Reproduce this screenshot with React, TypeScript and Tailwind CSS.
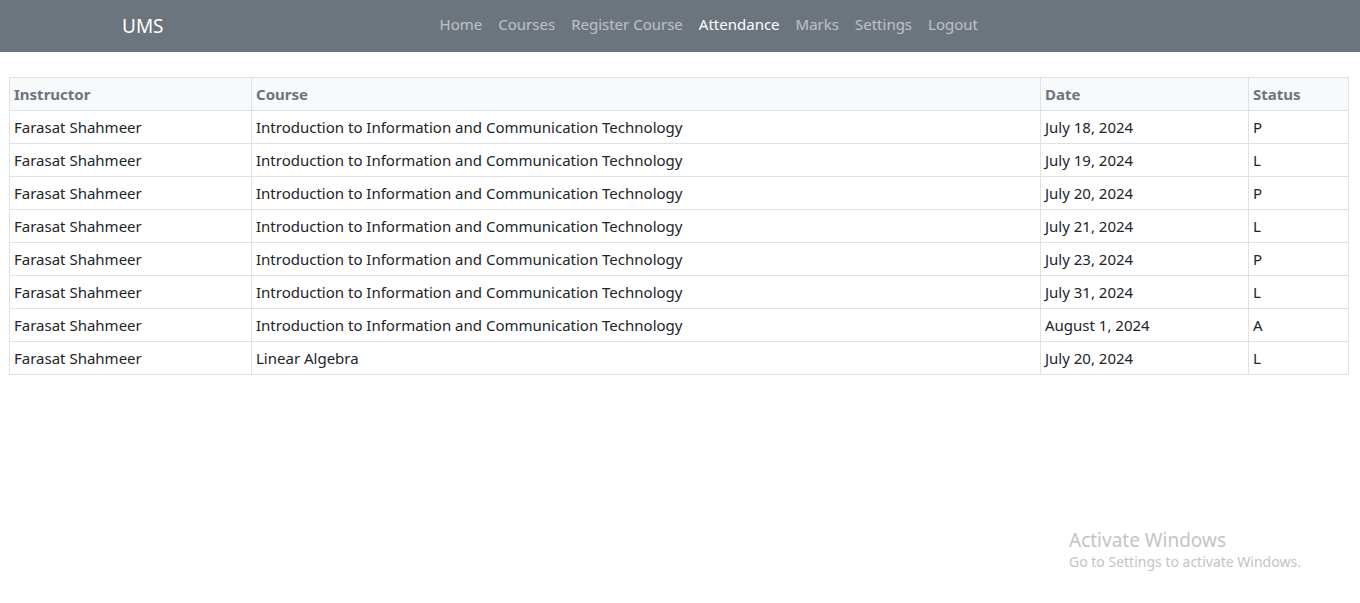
const rows = [
	{ course: "Introduction to Information and Communication Technology", date: "July 18, 2024", status: "P" },
	{ course: "Introduction to Information and Communication Technology", date: "July 19, 2024", status: "L" },
	{ course: "Introduction to Information and Communication Technology", date: "July 20, 2024", status: "P" },
	{ course: "Introduction to Information and Communication Technology", date: "July 21, 2024", status: "L" },
	{ course: "Introduction to Information and Communication Technology", date: "July 23, 2024", status: "P" },
	{ course: "Introduction to Information and Communication Technology", date: "July 31, 2024", status: "L" },
	{ course: "Introduction to Information and Communication Technology", date: "August 1, 2024", status: "A" },
	{ course: "Linear Algebra", date: "July 20, 2024", status: "L" },
];

const links = ["Home", "Courses", "Register Course", "Attendance", "Marks", "Settings", "Logout"];

export default function App() {
	return (
		<div className="relative min-h-[603px] bg-white font-['Noto_Sans',sans-serif] text-[#212529]">
			<nav className="h-[52px] bg-[#6c757d]">
				<div className="mx-auto flex h-full w-[1140px] items-center px-3">
					<span className="mr-4 text-[19px] text-white">UMS</span>
					<ul className="mx-auto mb-1 flex text-[15px]">
						{links.map((l) => (
							<li key={l}>
								<a className={`block px-2 py-2 ${l === "Attendance" ? "text-white" : "text-white/55"}`}>{l}</a>
							</li>
						))}
					</ul>
				</div>
			</nav>

			<div className="pl-[9px] pr-[11px] pt-[25px]">
				<table className="w-full border-collapse text-[15px]">
					<thead>
						<tr className="bg-[#f8f9fa] text-left font-bold text-[#6c757d]">
							<th className="w-[242px] border border-[#dee2e6] px-1 py-1 leading-6">Instructor</th>
							<th className="w-[789px] border border-[#dee2e6] px-1 py-1 leading-6">Course</th>
							<th className="w-[208px] border border-[#dee2e6] px-1 py-1 leading-6">Date</th>
							<th className="border border-[#dee2e6] px-1 py-1 leading-6">Status</th>
						</tr>
					</thead>
					<tbody>
						{rows.map((r, i) => (
							<tr key={i}>
								<td className="border border-[#dee2e6] px-1 py-1 leading-6">Farasat Shahmeer</td>
								<td className="border border-[#dee2e6] px-1 py-1 leading-6">{r.course}</td>
								<td className="border border-[#dee2e6] px-1 py-1 leading-6">{r.date}</td>
								<td className="border border-[#dee2e6] px-1 py-1 leading-6">{r.status}</td>
							</tr>
						))}
					</tbody>
				</table>
			</div>

			<div className="absolute left-[1069px] top-[528px] text-[#c4c4c4]">
				<div className="text-[19px] leading-6">Activate Windows</div>
				<div className="text-[14px] leading-5">Go to Settings to activate Windows.</div>
			</div>
		</div>
	);
}
